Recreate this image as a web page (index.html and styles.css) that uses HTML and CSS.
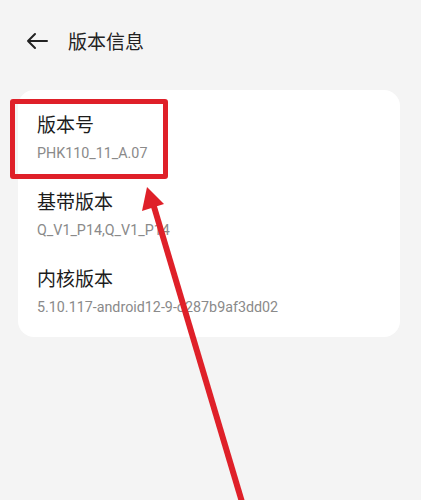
FILE: index.html
```html
<!DOCTYPE html>
<html lang="zh-CN">
<head>
    <meta charset="UTF-8">
    <meta name="viewport" content="width=device-width, initial-scale=1.0">
    <title>版本信息</title>
    <link rel="stylesheet" href="styles.css">
</head>
<body>
    <div class="header">
        <svg class="back-icon" width="22" height="18" viewBox="0 0 22 18">
            <path d="M21 9 H2 M9 2 L2 9 L9 16" fill="none" stroke="#222" stroke-width="2" stroke-linecap="round" stroke-linejoin="round"/>
        </svg>
        <div class="title">版本信息</div>
    </div>

    <div class="card">
        <div class="item">
            <div class="item-title">版本号</div>
            <div class="item-value">PHK110_11_A.07</div>
        </div>
        <div class="item">
            <div class="item-title">基带版本</div>
            <div class="item-value">Q_V1_P14,Q_V1_P14</div>
        </div>
        <div class="item">
            <div class="item-title">内核版本</div>
            <div class="item-value">5.10.117-android12-9-o287b9af3dd02</div>
        </div>
    </div>

    <!-- annotation: highlight box + pointer arrow -->
    <div class="highlight"></div>
    <svg class="pointer" width="421" height="500" viewBox="0 0 421 500">
        <line x1="152" y1="200" x2="242" y2="502" stroke="#df2029" stroke-width="6"/>
        <polygon points="147,187 142,211 164,204" fill="#df2029"/>
    </svg>
</body>
</html>
```

FILE: styles.css
```css
body {
    margin: 0;
    background: #f4f4f4;
    font-family: Roboto, "Noto Sans CJK SC", sans-serif;
    height: 500px;
    overflow: hidden;
    position: relative;
}

.header {
    display: flex;
    align-items: center;
    height: 81px;
    padding-left: 26px;
}

.back-icon {
    display: block;
    margin-right: 20px;
}

.title {
    font-size: 19px;
    color: #222;
}

.card {
    margin: 9px 21px 0 18px;
    background: #fff;
    border-radius: 16px;
    padding: 11px 0 5px;
}

.item {
    padding: 12px 19px 15px;
}

.item-title {
    font-size: 19px;
    line-height: 26px;
    color: #1c1c1c;
}

.item-value {
    margin-top: 4px;
    font-size: 14.3px;
    line-height: 20px;
    color: #8a8a8a;
}

.highlight {
    position: absolute;
    left: 10px;
    top: 99px;
    width: 148px;
    height: 70px;
    border: 5px solid #df2029;
    border-radius: 3px;
}

.pointer {
    position: absolute;
    left: 0;
    top: 0;
}
```
